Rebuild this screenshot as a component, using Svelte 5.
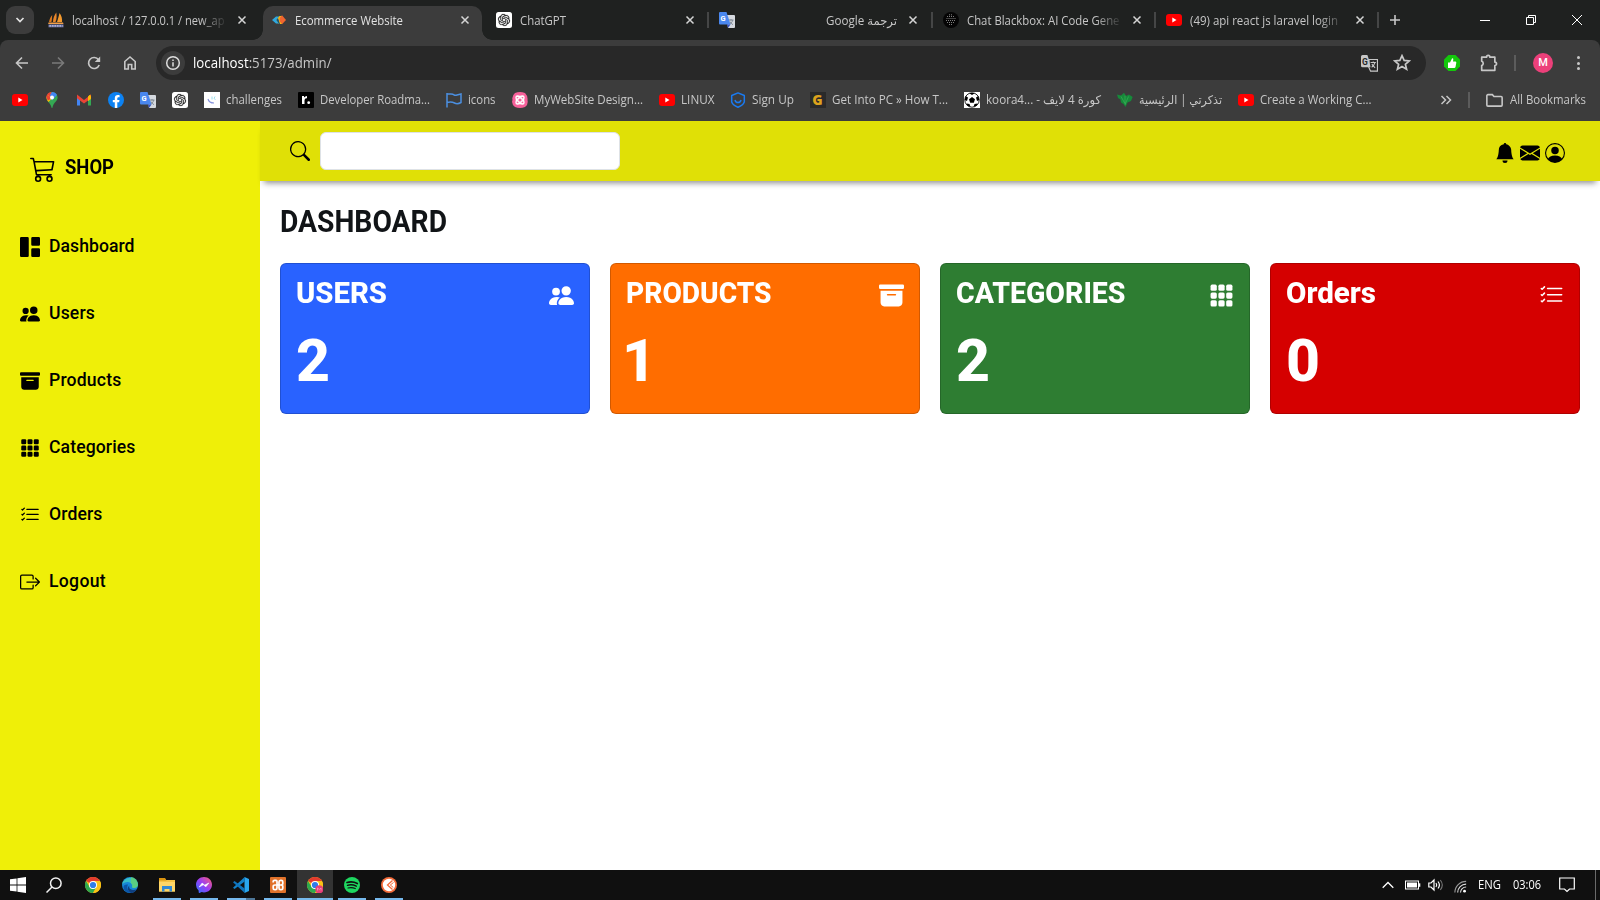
<script>
  // Sets the advance width of a label by horizontal scale, or by tracking when asked.
  function fit(node, width) {
    if (!width) return;
    const natural = node.getBoundingClientRect().width;
    const text = node.textContent.trim();
    if (node.dataset.mode === 'track') {
      node.style.letterSpacing = `${(width - natural) / text.length}px`;
    } else {
      node.style.transform = `scaleX(${width / natural})`;
      node.style.marginRight = `${width - natural}px`;
    }
  }

  const svg = (size, box, body) =>
    `<svg width="${size}" height="${size}" viewBox="0 0 ${box} ${box}" fill="currentColor" style="display:block;flex:none">${body}</svg>`;
  const bi = (name, size) => svg(size, 16, bootstrap[name]);

  const gridCells = [1, 6, 11]
    .flatMap((y) => [1, 6, 11].map((x) => `<rect x="${x}" y="${y}" width="4" height="4" rx="1"/>`))
    .join('');

  const bootstrap = {
    cart: '<path d="M0 1.5A.5.5 0 0 1 .5 1H2a.5.5 0 0 1 .485.379L2.89 3H14.5a.5.5 0 0 1 .49.598l-1 5a.5.5 0 0 1-.465.401l-9.397.472L4.415 11H13a.5.5 0 0 1 0 1H4a.5.5 0 0 1-.491-.408L2.01 3.607 1.61 2H.5a.5.5 0 0 1-.5-.5M3.102 4l.84 4.479 9.144-.459L13.89 4zM5 12a2 2 0 1 0 0 4 2 2 0 0 0 0-4m7 0a2 2 0 1 0 0 4 2 2 0 0 0 0-4m-7 1a1 1 0 1 1 0 2 1 1 0 0 1 0-2m7 0a1 1 0 1 1 0 2 1 1 0 0 1 0-2"/>',
    dashboard: '<path d="M0 1a1 1 0 0 1 1-1h5a1 1 0 0 1 1 1v14a1 1 0 0 1-1 1H1a1 1 0 0 1-1-1zm9 0a1 1 0 0 1 1-1h5a1 1 0 0 1 1 1v5a1 1 0 0 1-1 1h-5a1 1 0 0 1-1-1zm0 9a1 1 0 0 1 1-1h5a1 1 0 0 1 1 1v5a1 1 0 0 1-1 1h-5a1 1 0 0 1-1-1z"/>',
    people: '<path d="M7 14s-1 0-1-1 1-4 5-4 5 3 5 4-1 1-1 1zm4-6a3 3 0 1 0 0-6 3 3 0 0 0 0 6m-5.784 6A2.24 2.24 0 0 1 5 13c0-1.355.68-2.75 1.936-3.72A6.3 6.3 0 0 0 5 9c-4 0-5 3-5 4s1 1 1 1zM4.5 8a2.5 2.5 0 1 0 0-5 2.5 2.5 0 0 0 0 5"/>',
    archive: '<path d="M12.643 15C13.979 15 15 13.845 15 12.5V5H1v7.5C1 13.845 2.021 15 3.357 15zM5.5 7h5a.5.5 0 0 1 0 1h-5a.5.5 0 0 1 0-1M.8 1a.8.8 0 0 0-.8.8V3a.8.8 0 0 0 .8.8h14.4A.8.8 0 0 0 16 3V1.8a.8.8 0 0 0-.8-.8z"/>',
    grid: gridCells,
    list: '<path d="M5 11.5a.5.5 0 0 1 .5-.5h9a.5.5 0 0 1 0 1h-9a.5.5 0 0 1-.5-.5m0-4a.5.5 0 0 1 .5-.5h9a.5.5 0 0 1 0 1h-9a.5.5 0 0 1-.5-.5m0-4a.5.5 0 0 1 .5-.5h9a.5.5 0 0 1 0 1h-9a.5.5 0 0 1-.5-.5M3.854 2.146a.5.5 0 0 1 0 .708l-1.5 1.5a.5.5 0 0 1-.708 0l-.5-.5a.5.5 0 1 1 .708-.708L2 3.293l1.146-1.147a.5.5 0 0 1 .708 0m0 4a.5.5 0 0 1 0 .708l-1.5 1.5a.5.5 0 0 1-.708 0l-.5-.5a.5.5 0 1 1 .708-.708L2 7.293l1.146-1.147a.5.5 0 0 1 .708 0m0 4a.5.5 0 0 1 0 .708l-1.5 1.5a.5.5 0 0 1-.708 0l-.5-.5a.5.5 0 0 1 .708-.708l.146.147 1.146-1.147a.5.5 0 0 1 .708 0"/>',
    logout: '<path d="M10 12.5a.5.5 0 0 1-.5.5h-8a.5.5 0 0 1-.5-.5v-9a.5.5 0 0 1 .5-.5h8a.5.5 0 0 1 .5.5v2a.5.5 0 0 0 1 0v-2A1.5 1.5 0 0 0 9.5 2h-8A1.5 1.5 0 0 0 0 3.5v9A1.5 1.5 0 0 0 1.5 14h8a1.5 1.5 0 0 0 1.5-1.5v-2a.5.5 0 0 0-1 0z"/><path d="M15.854 8.354a.5.5 0 0 0 0-.708l-3-3a.5.5 0 0 0-.708.708L14.293 7.5H5.5a.5.5 0 0 0 0 1h8.793l-2.147 2.146a.5.5 0 0 0 .708.708z"/>',
    search: '<path d="M11.742 10.344a6.5 6.5 0 1 0-1.397 1.398h-.001q.044.06.098.115l3.85 3.85a1 1 0 0 0 1.415-1.414l-3.85-3.85a1 1 0 0 0-.115-.1zM12 6.5a5.5 5.5 0 1 1-11 0 5.5 5.5 0 0 1 11 0"/>',
    bell: '<path d="M8 16a2 2 0 0 0 2-2H6a2 2 0 0 0 2 2m.995-14.901a1 1 0 1 0-1.99 0A5 5 0 0 0 3 6c0 1.098-.5 6-2 7h14c-1.5-1-2-5.902-2-7 0-2.42-1.72-4.44-4.005-4.901"/>',
    envelope: '<path d="M.05 3.555A2 2 0 0 1 2 2h12a2 2 0 0 1 1.95 1.555L8 8.414zM0 4.697v7.104l5.803-3.558zM6.761 8.83l-6.57 4.027A2 2 0 0 0 2 14h12a2 2 0 0 0 1.808-1.144l-6.57-4.027L8 9.586zm3.436-.586L16 11.801V4.697z"/>',
    person: '<path d="M11 6a3 3 0 1 1-6 0 3 3 0 0 1 6 0"/><path fill-rule="evenodd" d="M0 8a8 8 0 1 1 16 0A8 8 0 0 1 0 8m8-7a7 7 0 0 0-5.468 11.37C3.242 11.226 4.805 10 8 10s4.757 1.225 5.468 2.37A7 7 0 0 0 8 1"/>'
  };

  const knot = 'M22.2819 9.8211a5.9847 5.9847 0 0 0-.5157-4.9108 6.0462 6.0462 0 0 0-6.5098-2.9A6.0651 6.0651 0 0 0 4.9807 4.1818a5.9847 5.9847 0 0 0-3.9977 2.9 6.0462 6.0462 0 0 0 .7427 7.0966 5.98 5.98 0 0 0 .511 4.9107 6.051 6.051 0 0 0 6.5146 2.9001A5.9847 5.9847 0 0 0 13.2599 24a6.0557 6.0557 0 0 0 5.7718-4.2058 5.9894 5.9894 0 0 0 3.9977-2.9001 6.0557 6.0557 0 0 0-.7475-7.0729zm-9.022 12.6081a4.4755 4.4755 0 0 1-2.8764-1.0408l.1419-.0804 4.7783-2.7582a.7948.7948 0 0 0 .3927-.6813v-6.7369l2.02 1.1686a.071.071 0 0 1 .038.052v5.5826a4.504 4.504 0 0 1-4.4945 4.4944zm-9.6607-4.1254a4.4708 4.4708 0 0 1-.5346-3.0137l.142.0852 4.783 2.7582a.7712.7712 0 0 0 .7806 0l5.8428-3.3685v2.3324a.0804.0804 0 0 1-.0332.0615L9.74 19.9502a4.4992 4.4992 0 0 1-6.1408-1.6464zM2.3408 7.8956a4.485 4.485 0 0 1 2.3655-1.9728V11.6a.7664.7664 0 0 0 .3879.6765l5.8144 3.3543-2.0201 1.1685a.0757.0757 0 0 1-.071 0l-4.8303-2.7865A4.504 4.504 0 0 1 2.3408 7.872zm16.5963 3.8558L13.1038 8.364 15.1192 7.2a.0757.0757 0 0 1 .071 0l4.8303 2.7913a4.4944 4.4944 0 0 1-.6765 8.1042v-5.6772a.79.79 0 0 0-.407-.667zm2.0107-3.0231l-.142-.0852-4.7735-2.7818a.7759.7759 0 0 0-.7854 0L9.409 9.2297V6.8974a.0662.0662 0 0 1 .0284-.0615l4.8303-2.7866a4.4992 4.4992 0 0 1 6.6802 4.66zM8.3065 12.863l-2.02-1.1638a.0804.0804 0 0 1-.038-.0567V6.0742a4.4992 4.4992 0 0 1 7.3757-3.4537l-.142.0805L8.704 5.459a.7948.7948 0 0 0-.3927.6813zm1.0976-2.3654l2.602-1.4998 2.6069 1.4998v2.9994l-2.5974 1.4997-2.6067-1.4997Z';

  const stroke = (color, width, d, extra = '') =>
    `<path d="${d}" fill="none" stroke="${color}" stroke-width="${width}" ${extra}/>`;

  const chromeBall =
    '<circle cx="8" cy="8" r="8" fill="#fbc116"/><path d="M8 8 1.07 4A8 8 0 0 1 14.93 4z" fill="#e33b2e"/><path d="M1.07 4A8 8 0 0 0 8 16l3.5-6L8 8 4.6 10z" fill="#2da94f"/><path d="M14.93 4H8v4l3.5 2L8 16A8 8 0 0 0 14.93 4" fill="#fbc116"/><circle cx="8" cy="8" r="4" fill="#fff"/><circle cx="8" cy="8" r="3.1" fill="#2f7de9"/>';

  const art = {
    pma: '<path d="M5 10c0-4 1.5-7 3.3-9.500.5 3.5.5 6.5-.8 9.500z" fill="#e8862a"/><path d="M9 10c1-3 2-6.5 2.5-9 2 2.5 3 6 2.5 9z" fill="#f39a2e"/><path d="M1 10c.4-2.500 1.5-5 3.2-7-.2 3-.2 5-.8 7z" fill="#d8761f"/><path d="M.5 10.500h14.500l.5 1.500H.2z" fill="#f2a04a"/><path d="M.5 12.500h15v2.800H.5z" fill="#7177a8"/><path d="M1.500 13.900h13" stroke="#d6d8ea" stroke-width="1" stroke-dasharray="1.500 1"/>',
    gems: '<path d="M1 8l4-3.500h3.500L5.500 8l3 3.500H5z" fill="#2fa9e0"/><path d="M5.500 8l3-4h2.500v8H8z" fill="#f4c20d"/><path d="M5.500 8l1.500-2 2 6H8z" fill="#14507a"/><path d="M8.500 6L11 3.200l4 4.800L11 12.300 8.500 9z" fill="#f0652f"/>',
    gpt: `<rect width="16" height="16" rx="2.5" fill="#fff"/><g transform="translate(2 2) scale(.5)" fill="#222"><path d="${knot}" stroke="#222" stroke-width=".4"/></g>`,
    translate: '<path d="M7 3h8a1 1 0 0 1 1 1v11a1 1 0 0 1-1 1H9z" fill="#d5d9df"/><path d="M9.500 8h5M12 7v1.500M13.700 8.200c-.5 2-1.800 3.300-3.200 4.100M11 9.500c.7 1.500 1.700 2.500 3 3.200" fill="none" stroke="#76818d" stroke-width=".9"/><path d="M1 0h6.500L11.500 12.500H1a1 1 0 0 1-1-1V1a1 1 0 0 1 1-1" fill="#4a87ee"/><path d="M8 12.500h3.500L9 16z" fill="#3454c4"/><text x="1.600" y="9" font-family="Roboto" font-size="7.5" font-weight="700" fill="#fff">G</text>',
    blackbox: '<circle cx="8" cy="8" r="8" fill="#050505"/><g fill="none" stroke="#8c8c8c" stroke-width=".9" stroke-dasharray="1 1"><path d="M4 4.500h8M3.500 6.500h9M3 8.500h10M4 10.500h8M6 2.800h4M6 12.500h4"/></g>',
    youtube: '<rect y="2" width="16" height="12" rx="3" fill="#f00"/><path d="M6.300 5.500v5l4.200-2.500z" fill="#fff"/>',
    maps: '<path d="M8 0a5.600 5.600 0 0 1 5.600 5.600C13.600 9.500 9.500 10.500 8.500 15.500q-.5 1-1 0C6.500 11 2.400 9.500 2.400 5.600A5.600 5.600 0 0 1 8 0" fill="#34a853"/><path d="M2.600 4.200A5.600 5.600 0 0 1 7 .1L10 3 4.500 8.500z" fill="#ea4335"/><path d="M8 0a5.600 5.600 0 0 1 5 3L8 8.500 6 3z" fill="#4285f4"/><path d="M2.400 5.600Q2.500 8 4.500 10L8 6.500 4 3Z" fill="#fbbc04"/><path d="M3.200 2.700L8 6 4 8.500Q1.500 5.500 3.200 2.700" fill="#ea4335"/><circle cx="8" cy="5.600" r="2" fill="#fff"/>',
    gmail: '<path d="M1 4v9.500h3V7.500z" fill="#4285f4"/><path d="M15 4v9.500h-3V7.500z" fill="#34a853"/><path d="M12 4.500L15 2.500v4.500l-3 2z" fill="#fbbc04"/><path d="M1 2.500L8 8l7-5.500v3.800L8 11.500 1 6.300z" fill="#ea4335"/><path d="M12 4.700L13.500 3q1.500 0 1.500 1.500V6.500l-3 2.200z" fill="#fbbc04"/>',
    facebook: '<circle cx="8" cy="8" r="8" fill="#0c82f3"/><path d="M11.100 10.300l.4-2.300H9.300V6.500c0-.7.3-1.300 1.300-1.300h1V3.200s-.9-.2-1.800-.2C8 3 6.800 4.100 6.800 6.200V8h-2v2.300h2V16h2.500v-5.700z" fill="#fff"/>',
    challenges: '<rect width="16" height="16" fill="#fff"/><path d="M4 7q1 4 6 4" fill="none" stroke="#8793dd" stroke-width="1.1"/><path d="M8 4.500v3M11 4.500l-1 2 1.5 1" fill="none" stroke="#9ee0ec" stroke-width="1"/>',
    roadmap: '<rect width="16" height="16" rx="1" fill="#000"/><path d="M4 4h2v1.500Q7 4 9 4v2.300Q6.500 6 6.500 8.500V12H4z" fill="#fff"/><circle cx="10.700" cy="10.700" r="1.400" fill="#fff"/>',
    flag: stroke('#4b8fe0', 1.5, 'M1 1v14.5M1 2h4q2 0 3 .8t3 .2l4-1v8.500q-3.500 2-6.500.5T1 10.500'),
    pink: '<path d="M3 1Q8-1 13 1 16 4 15.500 8 16.500 13 13 15 8 17 3 15-1 12 .5 8-.5 4 3 1" fill="#f7609a"/><g fill="none" stroke="#fff" stroke-width="1.400"><circle cx="8" cy="8" r="2.300"/><path d="M4 5.500Q4 4 5.500 4 8 5 10.500 4 12 4 12 5.500 11 8 12 10.500 12 12 10.500 12 8 11 5.500 12 4 12 4 10.500 5 8 4 5.500z"/></g>',
    shield: stroke('#1a7af0', 1.5, 'M8 .9L14.300 3.500v6.500Q13 13.500 8 15.200 3 13.500 1.700 10V3.500z', 'stroke-linejoin="round"') + stroke('#1a7af0', 1.5, 'M5 8Q5.500 10.500 8 10.500T11 8'),
    getinto: '<rect width="16" height="16" fill="#2a2a2a"/><text x="2.300" y="13" font-family="Open Sans" font-size="14" font-weight="800" fill="#dda21c">G</text>',
    ball: '<rect width="16" height="16" fill="#fff"/><circle cx="8" cy="8" r="7.200" fill="#fff" stroke="#111" stroke-width=".9"/><path d="M8 5l3 2.200-1.200 3.500H6.200L5 7.200z" fill="#000"/><path d="M5 .9h6L8 3zM.7 8L1.500 4l2.500 1.500-1 3.500zM15.300 8l-.8-4L12 5.500l1 3.500zM3.500 13.800l-1-2.300 3 .5 1 3zM12.500 13.800l1-2.300-3 .5-1 3z" fill="#000"/>',
    ticket: '<path d="M0 2.500L4 3.500 7 .8 9 4 12 2.500 15.700 5 14 9 10.500 10.500 8.500 15 6.500 12 4 10.500 3.500 7.500 1 6z" fill="#16893a"/><path d="M4 4.500l4.500 8M8 3.500V11M11.500 4.500L8 12.500" fill="none" stroke="#3fb65d" stroke-width=".6"/>',
    folder: stroke('#c7c7c7', 1.5, 'M.8 3.500a1 1 0 0 1 1-1H6l1.500 1.800h6.700a1 1 0 0 1 1 1v7a1 1 0 0 1-1 1H1.800a1 1 0 0 1-1-1z'),
    gtranslate: '<path d="M1.500 0H6l1.500 4.500L9 11.500H1.500A1.500 1.500 0 0 1 0 10V1.500A1.500 1.500 0 0 1 1.500 0" fill="#c7c7c7"/><path d="M7.500 4.200h8v11H9L7.300 11.500z" fill="none" stroke="#c7c7c7" stroke-width="1.1"/><text x="1" y="9" font-family="Roboto" font-size="8" font-weight="700" fill="#282828">G</text><path d="M9 7h5M11.500 6v1.500M13 7.500c-.5 2-1.500 3-3 4M10.300 8.500c.5 1.500 1.500 2.500 3 3.500" fill="none" stroke="#c7c7c7" stroke-width="1"/>',
    star: stroke('#c7c7c7', 1.5, 'M8 1.500l1.900 4.200 4.600.4-3.500 3 1.100 4.500L8 11.200l-4.100 2.400L5 9.100 1.500 6.100l4.600-.4z'),
    thumb: '<path d="M4.500 0h7L16 4.500v7L11.500 16h-7L0 11.500v-7z" fill="#14c70c"/><path d="M4 7.500h2L8 3.500q1.300-.7 1.300 1L9 6.500h2.500q1 .3.800 1.300L11.500 12q-.3 1-1.300 1H4z" fill="#fff"/>',
    puzzle: stroke('#c7c7c7', 1.5, 'M1.500 2.800h4.300a1.500 1.500 0 0 1 3 0H13.200v4.400a1.500 1.500 0 0 1 0 3v4.300H1.500v-4.200a2 2 0 0 0 0-3.800z', 'stroke-linejoin="round"'),
    back: stroke('#c7c7c7', 1.6, 'M14 8H3M8 2.500L2.500 8 8 13.500'),
    forward: stroke('#7a7a7a', 1.6, 'M2 8h11M8 2.500L13.500 8 8 13.500'),
    reload: stroke('#c7c7c7', 1.7, 'M13.200 10A5.500 5.500 0 1 1 12.500 4.700L13.500 6') + '<path d="M14.200 1.500V7H8.800z" fill="#c7c7c7"/>',
    home: stroke('#c7c7c7', 1.6, 'M2.800 14V6.500L8 2l5.200 4.500V14H9.700V9.500H6.300V14z'),
    info: stroke('#dedede', 1.5, 'M8 1.700a6.300 6.300 0 1 0 0 12.600A6.300 6.300 0 0 0 8 1.700M8 7.200V11.500M8 4.500V6'),
    windows: '<path d="M0 2.300l6.600-.9v6.200H0zM7.400 1.300L16 0v7.600H7.400zM0 8.400h6.600v6.200L0 13.700zM7.400 8.400H16V16l-8.600-1.300z" fill="#fff"/>',
    find: stroke('#f2f2f2', 1.5, 'M.5 15.500L6 10', '') + '<circle cx="9.800" cy="6.200" r="5.300" fill="none" stroke="#f2f2f2" stroke-width="1.500"/>',
    chrome: chromeBall,
    edge: '<circle cx="8" cy="8" r="8" fill="#1787d8"/><path d="M.2 7A8 8 0 0 1 15.900 7.200Q16 11 11.500 11q-2-.2-1.300-1.200Q11 8 9 6.200 5 3.500.2 7" fill="#38bfc5"/><path d="M9 .1A8 8 0 0 1 15.900 7.200Q16 11 11.500 11q-2-.2-1.300-1.200Q11 7.500 9 6z" fill="#63d270" opacity=".8"/><path d="M6 7.500Q3.500 13 9.500 15.800q-5 .5-7.500-3.300Q0 7 6 7.500" fill="#0b55a8"/><path d="M7.200 8.500Q6.500 12.500 11 13q2.200 0 3.800-.8Q12.500 16 9 15.900 3.500 12.500 7.200 8.500" fill="#0f3f80"/>',
    files: '<path d="M0 2a1 1 0 0 1 1-1h4.500l1.500 2H16v11.500H0z" fill="#f6c344"/><path d="M0 1h6l1.500 2.500H0z" fill="#d9930f"/><path d="M0 5h16v9.500H0z" fill="#ffd667"/><path d="M3 9h10v5.500h-2.500V12h-5v2.500H3z" fill="#3389d4"/>',
    messenger: '<defs><linearGradient id="mg" x1="0" y1="1" x2="1" y2="0"><stop offset="0" stop-color="#2874ff"/><stop offset=".5" stop-color="#9a3df5"/><stop offset="1" stop-color="#ff5f6f"/></linearGradient></defs><path d="M8 0c4.500 0 8 3.300 8 7.700s-3.500 7.700-8 7.700q-1.300 0-2.300-.3L3.500 16q-.8.200-.8-1L2.600 13.500A7.500 7.500 0 0 1 0 7.700C0 3.300 3.500 0 8 0" fill="url(#mg)"/><path d="M3.200 10l2.900-3.900 2.600 2L12.800 6 9.900 9.800l-2.600-2z" fill="#fff" stroke="#fff" stroke-width=".6"/>',
    code: '<path d="M11.500 0L16 2v12l-4.500 2z" fill="#29a6ee"/><path d="M11.700 0v4.500L1.500 12 0 10.700z" fill="#1382c9"/><path d="M11.700 16v-4.500L1.500 4 0 5.300z" fill="#0f74bd"/>',
    xampp: '<rect width="16" height="16" rx="1" fill="#e1722a"/><g fill="none" stroke="#fff" stroke-width="1.700" stroke-linejoin="round"><path d="M3.200 5.500V4.200Q3.200 3.300 4.500 3.300H6Q7 3.300 7 4.500V6.500Q7 8 8 8H11Q12.800 8 12.800 6.500V4.800Q12.800 3.300 11.200 3.300H10.500Q9 3.300 9 5V11Q9 12.700 10.500 12.700H11.200Q12.800 12.700 12.800 11.200V9.500Q12.800 8 11 8M8 8H5Q3.200 8 3.200 9.500V11.200Q3.200 12.700 4.800 12.700H5.500Q7 12.700 7 11V8"/></g>',
    chromeUser: chromeBall + '<circle cx="12.300" cy="12.300" r="4" fill="#e83e78"/><path d="M10.500 13.500v-2.500l1.800 1.500 1.800-1.500v2.500" fill="none" stroke="#f7a6c2" stroke-width=".7"/>',
    spotify: '<circle cx="8" cy="8" r="8" fill="#1ed760"/>' + stroke('#101010', 1.7, 'M3 5.500Q8.500 4 13.300 6.500', 'stroke-linecap="round"') + stroke('#101010', 1.4, 'M3.500 8.300Q8 7 12.300 9.200', 'stroke-linecap="round"') + stroke('#101010', 1.1, 'M4 11Q8 10 11.300 11.600', 'stroke-linecap="round"'),
    postman: '<circle cx="8" cy="8" r="8" fill="#f26b3a"/><circle cx="8" cy="8" r="6.200" fill="#fff"/><path d="M11.500 3.500L6.500 8l5 4.500" fill="none" stroke="#f26b3a" stroke-width="1.300"/><path d="M12.500 5.500L9.300 8l3 2.500" fill="none" stroke="#f26b3a" stroke-width="1"/>',
    battery: '<rect x=".5" y="4" width="13" height="8" fill="none" stroke="#fff"/><rect x="2" y="5.500" width="10" height="5" fill="#fff"/><rect x="14" y="6.300" width="1.300" height="3.500" fill="#fff"/>',
    speaker: stroke('#fff', 1.2, 'M.8 6h2.200L6 3v10L3 10H.8zM8 6q1.500 2 0 4M10 4.500q2.800 3.500 0 7') + stroke('#777', 1.1, 'M12.300 3q4 5 0 10'),
    wifi: stroke('#999', 1.2, 'M2 14.500A12 12 0 0 1 14 2.500') + stroke('#ddd', 1.2, 'M5 14.500a9 9 0 0 1 9-9M8 14.500a6 6 0 0 1 6-6') + '<circle cx="12.300" cy="13" r="1.500" fill="#fff"/>',
    notice: stroke('#fff', 1.2, 'M.7 1h14.600v11H10.500L8 14.500 5.500 12H.7z')
  };

  const tabs = [
    { icon: 'pma', title: 'localhost / 127.0.0.1 / new_ap', width: 152.5 },
    { icon: 'gems', title: 'Ecommerce Website', width: 108, active: true },
    { icon: 'gpt', title: 'ChatGPT', width: 46, divider: true },
    { icon: 'translate', title: 'Google ترجمة', width: 71, end: true, divider: true },
    { icon: 'blackbox', title: 'Chat Blackbox: AI Code Gene', width: 152.5, divider: true },
    { icon: 'youtube', title: '(49) api react js laravel login', width: 148, divider: true }
  ];

  const bookmarks = [
    { icon: 'youtube' },
    { icon: 'maps' },
    { icon: 'gmail' },
    { icon: 'facebook' },
    { icon: 'translate' },
    { icon: 'gpt' },
    { icon: 'challenges', title: 'challenges', width: 56 },
    { icon: 'roadmap', title: 'Developer Roadma...', width: 110 },
    { icon: 'flag', title: 'icons', width: 27.5 },
    { icon: 'pink', title: 'MyWebSite Design...', width: 109 },
    { icon: 'youtube', title: 'LINUX', width: 33.5 },
    { icon: 'shield', title: 'Sign Up', width: 42 },
    { icon: 'getinto', title: 'Get Into PC » How T...', width: 116 },
    { icon: 'ball', title: 'koora4... - كورة 4 لايف', width: 115 },
    { icon: 'ticket', title: 'تذكرتي | الرئيسية', width: 83 },
    { icon: 'youtube', title: 'Create a Working C...', width: 111.5 }
  ];

  const nav = [
    { icon: 'dashboard', title: 'Dashboard', width: 85.5 },
    { icon: 'people', title: 'Users', width: 46 },
    { icon: 'archive', title: 'Products', width: 72.5 },
    { icon: 'grid', title: 'Categories', width: 86.5 },
    { icon: 'list', title: 'Orders', width: 53.5 },
    { icon: 'logout', title: 'Logout', width: 57 }
  ];

  const cards = [
    { title: 'USERS', value: 2, icon: 'people', color: '#2962ff', width: 91 },
    { title: 'PRODUCTS', value: 1, icon: 'archive', color: '#ff6d00', width: 145.5 },
    { title: 'CATEGORIES', value: 2, icon: 'grid', color: '#2e7d32', width: 169.5 },
    { title: 'Orders', value: 0, icon: 'list', color: '#d50000', width: 90 }
  ];

  const apps = [
    { icon: 'chrome' },
    { icon: 'edge' },
    { icon: 'files', open: true },
    { icon: 'messenger', open: true },
    { icon: 'code', open: true, stacked: true },
    { icon: 'xampp', open: true },
    { icon: 'chromeUser', open: true, active: true },
    { icon: 'spotify', open: true },
    { icon: 'postman', open: true }
  ];
</script>

<div class="screen">
  <div class="tabstrip">
    <div class="tab-search">
      <svg width="10" height="10" viewBox="0 0 10 10"><path d="M1.5 3l3.5 3.5L8.5 3" fill="none" stroke="#e3e3e3" stroke-width="1.7" /></svg>
    </div>
    <div class="tabs">
      {#each tabs as tab}
        <div class="tab" class:active={tab.active} class:divider={tab.divider}>
          <span class="favicon">{@html svg(16, 16, art[tab.icon])}</span>
          <span class="tab-title" class:end={tab.end}><span class="label" use:fit={tab.width}>{tab.title}</span></span>
          <svg class="tab-close" width="10" height="10" viewBox="0 0 10 10"><path d="M1.5 1.5l7 7M8.5 1.5l-7 7" stroke="#d5d5d5" stroke-width="1.5" /></svg>
        </div>
      {/each}
    </div>
    <svg class="plus" width="12" height="12" viewBox="0 0 12 12"><path d="M6 1v10M1 6h10" stroke="#c7c7c7" stroke-width="1.6" /></svg>
    <div class="window-buttons">
      <svg width="12" height="12" viewBox="0 0 12 12"><path d="M1 6.5h10" stroke="#fff" /></svg>
      <svg width="12" height="12" viewBox="0 0 12 12"><path d="M1.5 3.5h7v7h-7zM3.5 3.5v-2h7v7h-2" fill="none" stroke="#fff" /></svg>
      <svg width="12" height="12" viewBox="0 0 12 12"><path d="M1 1l10 10M11 1L1 11" stroke="#fff" /></svg>
    </div>
  </div>

  <div class="toolbar">
    <div class="history">
      {#each ['back', 'forward', 'reload', 'home'] as name}
        {@html svg(16, 16, art[name])}
      {/each}
    </div>
    <div class="omnibox">
      <span class="site-info">{@html svg(16, 16, art.info)}</span>
      <span class="url"><span class="label" use:fit={138.5}><b>localhost</b>:5173/admin/</span></span>
      <span class="omni-icon">{@html svg(17, 16, art.gtranslate)}</span>
      <span class="omni-icon">{@html svg(18, 16, art.star)}</span>
    </div>
    <div class="extensions">
      {@html svg(16, 16, art.thumb)}
      <span class="puzzle">{@html svg(18, 16, art.puzzle)}</span>
      <i class="rule"></i>
      <span class="avatar">M</span>
      <span class="dots"><i></i><i></i><i></i></span>
    </div>
  </div>

  <div class="bookmarks">
    {#each bookmarks as mark}
      <div class="bookmark">
        {@html svg(16, 16, art[mark.icon])}
        {#if mark.title}<span class="label" use:fit={mark.width}>{mark.title}</span>{/if}
      </div>
    {/each}
    <div class="all-bookmarks">
      <svg width="12" height="10" viewBox="0 0 12 10"><path d="M1.5 1l4 4-4 4M6.5 1l4 4-4 4" fill="none" stroke="#c7c7c7" stroke-width="1.5" /></svg>
      <i class="rule"></i>
      <div class="bookmark wide">
        {@html svg(17, 16, art.folder)}
        <span class="label" use:fit={76}>All Bookmarks</span>
      </div>
    </div>
  </div>

  <div class="page">
    <aside>
      <div class="brand">
        {@html bi('cart', 26)}
        <span class="label" use:fit={49}>SHOP</span>
      </div>
      <nav>
        {#each nav as item}
          <div class="nav-item">
            {@html bi(item.icon, 20)}
            <span class="label" data-mode="track" use:fit={item.width}>{item.title}</span>
          </div>
        {/each}
      </nav>
    </aside>
    <div class="content">
      <header>
        {@html bi('search', 20)}
        <input type="text" aria-label="Search" />
        <div class="account">
          {@html bi('bell', 20)}
          {@html bi('envelope', 20)}
          {@html bi('person', 20)}
        </div>
      </header>
      <main>
        <h1><span class="label" use:fit={167}>DASHBOARD</span></h1>
        <div class="cards">
          {#each cards as card}
            <section class="card" style:background-color={card.color}>
              <div class="card-head">
                <h2><span class="label" use:fit={card.width}>{card.title}</span></h2>
                <span class="card-icon">{@html bi(card.icon, 25)}</span>
              </div>
              <strong class:narrow={card.value === 1}>{card.value}</strong>
            </section>
          {/each}
        </div>
      </main>
    </div>
  </div>

  <footer class="taskbar">
    <div class="app">{@html svg(16, 16, art.windows)}</div>
    <div class="app">{@html svg(16, 16, art.find)}</div>
    <div class="apps">
      {#each apps as app}
        <div class="app" class:open={app.open} class:current={app.active} class:stacked={app.stacked}>
          {@html svg(16, 16, art[app.icon])}
        </div>
      {/each}
    </div>
    <div class="tray">
      <svg class="chevron" width="12" height="8" viewBox="0 0 12 8"><path d="M.7 6.8L6 1.5l5.3 5.3" fill="none" stroke="#fff" stroke-width="1.3" /></svg>
      <span class="battery">{@html svg(16, 16, art.battery)}</span>
      <span class="speaker">{@html svg(16, 16, art.speaker)}</span>
      <span class="wifi">{@html svg(15, 16, art.wifi)}</span>
      <span class="language"><span class="label" use:fit={23}>ENG</span></span>
      <span class="clock"><span class="label" use:fit={28}>03:06</span></span>
      <span class="notice">{@html svg(16, 16, art.notice)}</span>
      <i class="peek"></i>
    </div>
  </footer>
</div>

<style>
  :global(body) {
    margin: 0;
    overflow: hidden;
  }

  .screen {
    width: 1600px;
    height: 900px;
    display: flex;
    flex-direction: column;
    overflow: hidden;
    box-sizing: border-box;
    background: #3c3c3c;
    color: #c7c7c7;
    font: 12px/16px "Open Sans", "Noto Sans", "DejaVu Sans", sans-serif;
  }

  .screen * {
    box-sizing: border-box;
  }

  .label {
    display: inline-block;
    flex: none;
    white-space: pre;
    transform-origin: left center;
  }

  .rule {
    width: 2px;
    height: 16px;
    background: #5c5c5c;
  }

  /* Browser tabs */
  .tabstrip {
    height: 40px;
    flex: none;
    display: flex;
    background: #1f2120;
  }

  .tab-search {
    width: 28px;
    height: 28px;
    margin: 6px 5px 0 6px;
    border-radius: 9px;
    background: #3c3c3c;
    display: grid;
    place-items: center;
  }

  .tabs {
    display: flex;
  }

  .tab {
    position: relative;
    width: 223.4px;
    height: 34px;
    margin-top: 6px;
    padding: 0 15px 6px 9px;
    display: flex;
    align-items: center;
  }

  .tab.divider {
    padding-left: 10px;
    padding-right: 14px;
  }

  .tab.divider::after {
    content: "";
    position: absolute;
    right: 0;
    top: 6px;
    width: 2px;
    height: 16px;
    background: #454646;
  }

  .tab.active {
    color: #e3e3e3;
  }

  .tab.active::before {
    content: "";
    position: absolute;
    inset: 0 4px 0 1px;
    border-radius: 10px 10px 0 0;
    background: #3c3c3c;
  }

  .tab.active::after {
    content: "";
    position: absolute;
    left: -9px;
    right: -6px;
    bottom: 0;
    height: 10px;
    background:
      radial-gradient(circle at 0 0, transparent 9.5px, #3c3c3c 10px) left / 10px 10px no-repeat,
      radial-gradient(circle at 100% 0, transparent 9.5px, #3c3c3c 10px) right / 10px 10px no-repeat;
  }

  .favicon,
  .tab-title,
  .tab-close {
    position: relative;
    z-index: 1;
  }

  .tab-title {
    width: 154px;
    margin: 1px 11px 0 8px;
    display: flex;
    mask-image: linear-gradient(90deg, #000 128px, transparent 156px);
  }

  .tab-title.end {
    justify-content: flex-end;
    mask-image: none;
  }

  .plus {
    margin: 14px 0 0 10px;
  }

  .window-buttons {
    margin: 14px 17px 0 auto;
    display: flex;
    gap: 34px;
  }

  /* Address bar */
  .toolbar {
    height: 40px;
    flex: none;
    padding-top: 6px;
    display: flex;
    align-items: flex-start;
    border-radius: 8px 8px 0 0;
    background: #3c3c3c;
    box-shadow: 0 -8px 0 0 #1f2120;
    clip-path: inset(0);
  }

  .history {
    width: 156px;
    padding: 9px 0 0 14px;
    display: flex;
    gap: 20px;
  }

  .omnibox {
    width: 1270px;
    height: 34px;
    padding: 0 15px 0 5px;
    display: flex;
    align-items: center;
    border-radius: 17px;
    background: #282828;
  }

  .site-info {
    width: 24px;
    height: 24px;
    border-radius: 50%;
    display: grid;
    place-items: center;
    background: #3c3c3c;
  }

  .url {
    flex: 1;
    margin-left: 8px;
    font-size: 14px;
    line-height: 20px;
  }

  .url b {
    font-weight: 400;
    color: #fff;
  }

  .omni-icon {
    margin-left: 15px;
  }

  .extensions {
    height: 34px;
    padding-left: 18px;
    display: flex;
    align-items: center;
    gap: 17px;
  }

  .puzzle {
    margin: 0 -1px 0 3px;
  }

  .avatar {
    width: 20px;
    height: 20px;
    border-radius: 50%;
    background: #ec407a;
    color: #fff;
    text-align: center;
    font: 500 11px/20px Roboto, sans-serif;
  }

  .dots {
    margin-left: 7px;
    display: grid;
    gap: 2.5px;
  }

  .dots i {
    width: 3px;
    height: 3px;
    border-radius: 50%;
    background: #c7c7c7;
  }

  /* Bookmarks */
  .bookmarks {
    height: 41px;
    flex: none;
    padding: 0 14px 1px 12px;
    display: flex;
    align-items: center;
    gap: 16px;
  }

  .bookmark {
    display: flex;
    align-items: center;
    gap: 6px;
  }

  .all-bookmarks {
    margin-left: auto;
    display: flex;
    align-items: center;
    gap: 16px;
  }

  .wide {
    gap: 7px;
  }

  /* Shop admin */
  .page {
    height: 749px;
    flex: none;
    display: flex;
    background: #fff;
    color: #000;
    font-family: Roboto, sans-serif;
  }

  aside {
    width: 260px;
    background: #efef08;
  }

  .brand {
    height: 116px;
    padding: 35px 0 0 30px;
    display: flex;
    gap: 9px;
    font-size: 20.5px;
    font-weight: 700;
    line-height: 22px;
  }

  .nav-item {
    height: 67px;
    padding-left: 20px;
    display: flex;
    gap: 9px;
    font-size: 17.6px;
    font-weight: 500;
    line-height: 18px;
  }

  .content {
    flex: 1;
  }

  header {
    height: 60px;
    padding: 0 35px 0 30px;
    display: flex;
    align-items: center;
    gap: 10px;
    background: #e0e006;
    box-shadow: 0 6px 6px -4px rgba(0, 0, 0, 0.45);
  }

  input {
    width: 300px;
    height: 38px;
    margin-bottom: 1px;
    border: 1px solid #dee2e6;
    border-radius: 6px;
    background: #fff;
  }

  .account {
    margin: 4px 0 0 auto;
    display: flex;
    gap: 5px;
  }

  main {
    padding: 20px;
  }

  h1 {
    height: 62px;
    margin: 0;
    color: #111417;
    font-size: 30.5px;
    font-weight: 700;
    line-height: 42px;
  }

  .cards {
    display: grid;
    grid-template-columns: repeat(4, 1fr);
    gap: 20px;
  }

  .card {
    height: 151px;
    padding: 9px 15px;
    border: 1px solid rgba(0, 0, 0, 0.175);
    border-radius: 6px;
    color: #fff;
  }

  .card-head {
    display: flex;
    justify-content: space-between;
  }

  h2 {
    margin: 0;
    font-size: 30px;
    font-weight: 800;
    line-height: 40px;
  }

  .card-icon {
    margin-top: 10px;
  }

  strong {
    display: block;
    margin-top: 17px;
    font-size: 59px;
    font-weight: 800;
    line-height: 62px;
  }

  strong.narrow {
    margin-left: -4px;
  }

  /* Desktop taskbar */
  .taskbar {
    height: 30px;
    flex: none;
    display: flex;
    background: #101010;
    color: #fff;
  }

  .app {
    width: 36px;
    height: 30px;
    display: flex;
    align-items: center;
    justify-content: center;
  }

  .apps {
    margin-left: 3px;
    display: flex;
    gap: 1px;
  }

  .open {
    background: linear-gradient(#76b9ed, #76b9ed) center bottom / 28px 2px no-repeat;
  }

  .stacked {
    background:
      linear-gradient(90deg, #76b9ed 19px, #4e789a 19px) center bottom / 28px 2px no-repeat;
  }

  .current {
    background: linear-gradient(#76b9ed, #76b9ed) center bottom / 36px 2px no-repeat #333;
  }

  .tray {
    margin-left: auto;
    display: flex;
    align-items: center;
  }

  .battery {
    margin-left: 11px;
  }

  .speaker {
    margin-left: 7px;
  }

  .wifi {
    margin: 2px 0 0 9px;
  }

  .language {
    margin-left: 10px;
  }

  .clock {
    margin-left: 12px;
  }

  .notice {
    margin-left: 18px;
  }

  .peek {
    width: 1px;
    height: 30px;
    margin: 0 4px 0 20px;
    background: #6a6a6a;
  }
</style>
